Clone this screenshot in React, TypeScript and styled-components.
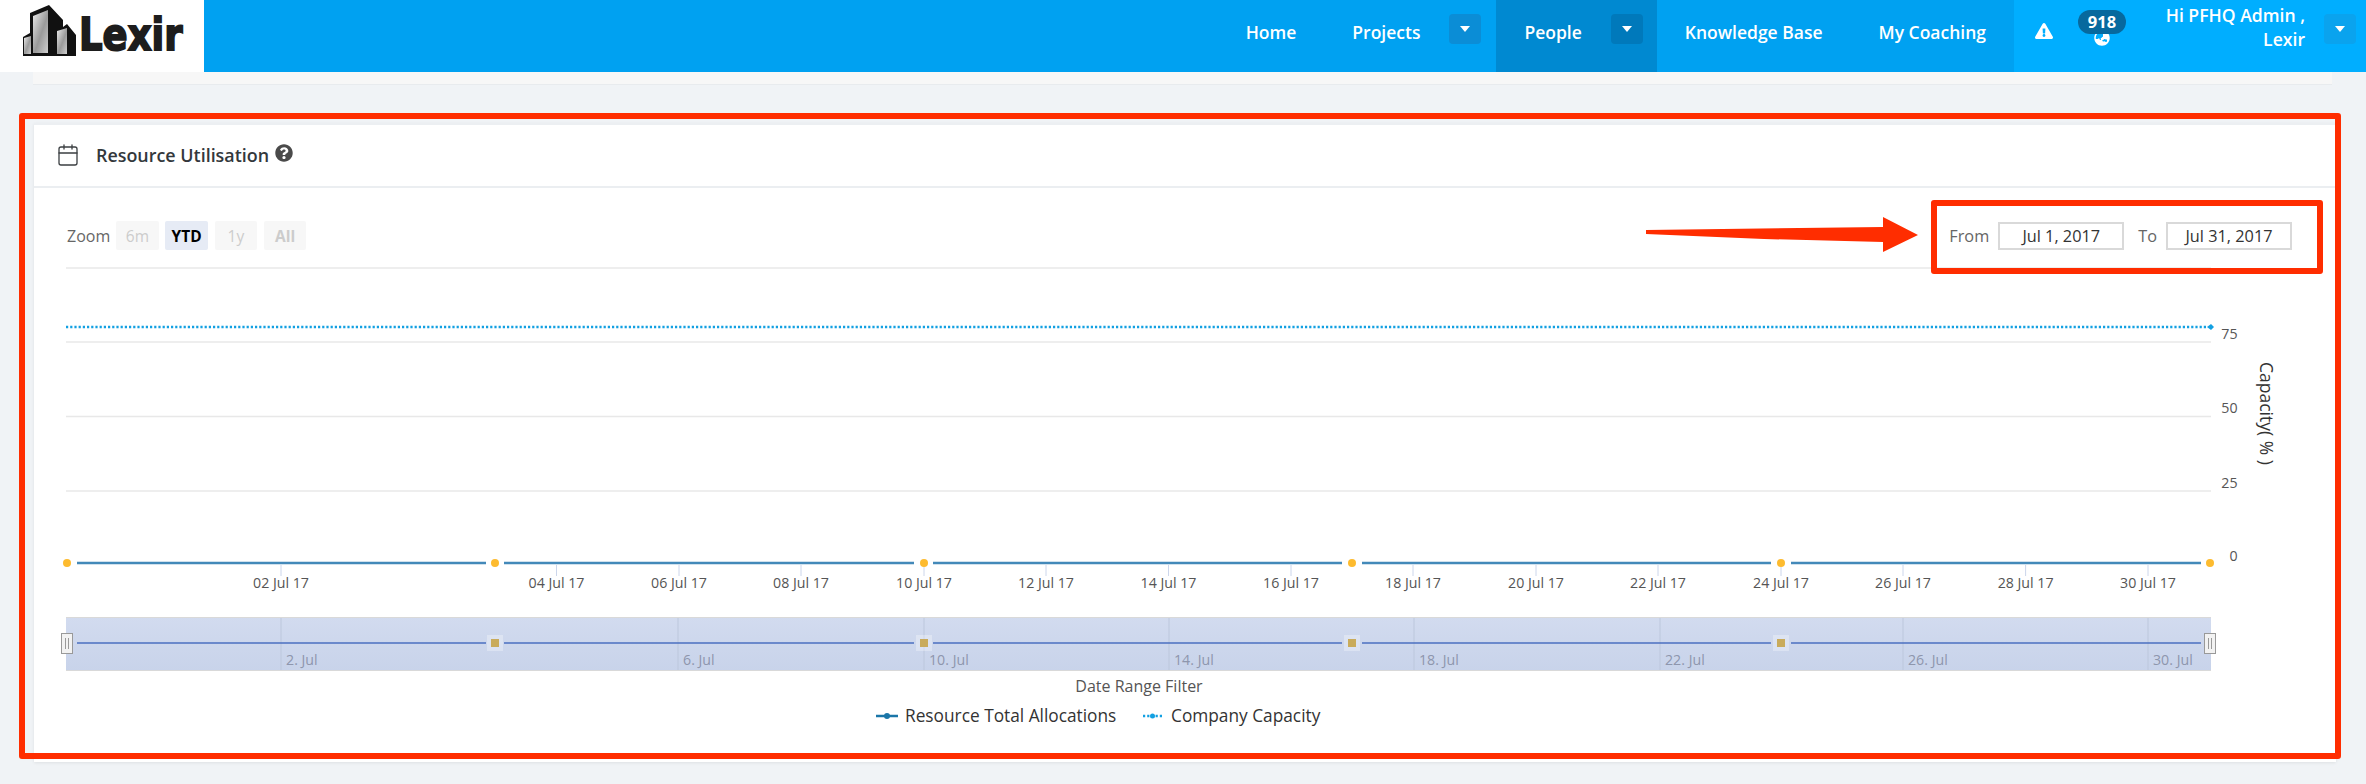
import React from "react";
import styled, { createGlobalStyle } from "styled-components";
import { FaExclamationTriangle, FaQuestionCircle, FaGlobeAsia } from "react-icons/fa";
import { Calendar } from "lucide-react";

const Global = createGlobalStyle`
  html, body { margin: 0; padding: 0; background: #f0f3f6; }
  body { font-family: "Open Sans", "Liberation Sans", sans-serif; overflow: hidden; height: 784px; }
`;

const Header = styled.header`
  display: flex; height: 72px; background: #00a1f1; color: #fff;
`;
const LogoBox = styled.div`
  width: 204px; background: #fff; display: flex; align-items: flex-start; flex: none; gap: 2px; padding: 4px 0 0 23px; box-sizing: border-box;
`;
const LogoText = styled.span`
  font-family: "DejaVu Sans", sans-serif; font-weight: 700; font-size: 37px; line-height: 44px; margin-top: 14px;
  color: #1d1d1d; -webkit-text-stroke: 1.6px #1d1d1d;
  display: inline-block; transform: scaleY(1.2); transform-origin: 0 100%;
`;
const Nav = styled.nav`
  display: flex; margin-left: auto; height: 72px; font-weight: 600; font-size: 17.5px;
`;
const NavItem = styled.div<{ $active?: boolean; $right?: number }>`
  display: flex; align-items: center; padding: 0 ${p => p.$right ?? 28}px 8px 28px; background: ${p => (p.$active ? "#0089d1" : "transparent")};
`;
const CaretButton = styled.span<{ $tone: string; $ml: number; $mt?: number }>`
  display: flex; align-items: center; justify-content: center; width: 32px; height: 30px; border-radius: 4px;
  margin-left: ${p => p.$ml}px; margin-top: ${p => p.$mt ?? 0}px; background: ${p => p.$tone}; flex: none;
  &::after { content: ""; border: 5px solid transparent; border-top: 6px solid #fff; border-bottom: 0; }
`;
const UserArea = styled.div`
  width: 352px; flex: none; background: #00aeff; display: flex; align-items: flex-start; box-sizing: border-box; padding-left: 21px;
  font-weight: 600; font-size: 17.6px;
`;
const Alert = styled.span`
  display: flex; margin-top: 22px; font-size: 18px;
`;
const Notice = styled.div`
  position: relative; width: 48px; height: 48px; margin-left: 25px; display: flex; justify-content: center; font-size: 16px; padding-top: 30px; box-sizing: border-box;
`;
const Badge = styled.span`
  position: absolute; top: 10px; left: 0; width: 48px; height: 24px; border-radius: 12px; background: #07699e;
  font-size: 16.5px; font-weight: 700; line-height: 24px; text-align: center; color: #fff;
`;
const UserName = styled.div`
  width: 152px; margin-left: 27px; text-align: right; line-height: 24px; padding-top: 3px; margin-right: 19px;
`;

const Strip = styled.div`
  height: 12px; margin: 0 34px 0 33px; background: #f7f7f7; border-bottom: 1px solid #e8ebee;
`;
const CardWrap = styled.section`
  position: relative; width: 2302px; height: 639px; margin: 38px 0 0 34px; background: #fff;
  box-shadow: 0 1px 3px rgba(0,0,0,.08); box-sizing: border-box; border-top: 2px solid #eceff2;
`;
const CardHead = styled.div`
  display: flex; align-items: center; height: 63px; border-bottom: 2px solid #ebeef1; padding: 0 0 2px 22px; box-sizing: border-box; color: #3b3f42;
`;
const Title = styled.h2`
  margin: 0 0 0 16px; font-size: 17.9px; font-weight: 600; color: #33383c;
`;
const HelpIcon = styled.span`
  display: flex; margin-left: 6px; margin-top: -3px; color: #4a4a4a; font-size: 18px;
`;
const Toolbar = styled.div`
  display: flex; align-items: center; height: 29px; margin-top: 33px; padding: 0 44px 0 33px; font-size: 16px; color: #666;
`;
const ZoomLabel = styled.span`
  margin-right: 6px; font-size: 16px;
`;
const ZoomBtn = styled.span<{ $on?: boolean; $strong?: boolean }>`
  width: 42.5px; height: 29px; margin-right: 6.7px; border-radius: 2px; display: flex; align-items: center; justify-content: center;
  background: ${p => (p.$on ? "#e6ebf5" : "#f7f7f7")}; color: ${p => (p.$on ? "#000" : "#cccccc")};
  font-weight: ${p => (p.$on || p.$strong ? 700 : 400)}; font-size: 15.5px;
`;
const DateRange = styled.div`
  margin-left: auto; display: flex; align-items: center; font-size: 16.3px; color: #666;
`;
const DateLabel = styled.label`
  margin-right: 9px;
`;
const DateField = styled.input`
  width: 126px; height: 28px; box-sizing: border-box; border: 2px solid #d9d9d9; background: #fff; margin-right: 14px; padding: 0;
  font: 16.3px "Open Sans", sans-serif; color: #333; text-align: center; outline: none;
  &:last-child { margin-right: 0; }
`;
const ChartSvg = styled.svg`
  display: block; width: 2302px; height: 510px; margin-top: 3px;
`;
const AxisText = styled.text`
  font: 14.2px "Open Sans", sans-serif; fill: #555;
`;
const NavText = styled.text`
  font: 14.2px "Open Sans", sans-serif; fill: #8e96ad;
`;
const LegendText = styled.text`
  font: 17.3px "Open Sans", sans-serif; fill: #333;
`;
const RedFrame = styled.div`
  position: absolute; left: -15px; top: -12px; width: 2322px; height: 646px; box-sizing: border-box;
  border: 6px solid #ff2d00; border-radius: 3px; pointer-events: none;
`;
const RedBox = styled.div`
  position: absolute; left: 1897px; top: 75px; width: 392px; height: 74px; box-sizing: border-box;
  border: 6px solid #ff2d00; border-radius: 3px; pointer-events: none;
`;
const Arrow = styled.svg`
  position: absolute; left: 1610px; top: 88px; width: 276px; height: 45px;
`;

const Building = () => (
  <svg width="54" height="54" viewBox="23 3 54 54" style={{ flex: "none" }}>
    <defs>
      <linearGradient id="g" x1="0" x2="1" y1="0" y2="1">
        <stop offset="0" stopColor="#ececec" />
        <stop offset="0.55" stopColor="#9a9a9a" />
        <stop offset="1" stopColor="#cfcfcf" />
      </linearGradient>
    </defs>
    <polygon fill="#111" points="23,36 30,32 30,12 49,4 63,19 63,26 67,23 76,34 76,55 23,55" />
    <polygon fill="url(#g)" points="33,15 48,9 48,52 33,52" />
    <polygon fill="url(#g)" points="24,37 31,35 31,53 24,53" />
    <polygon fill="url(#g)" points="57,30 67,27 67,53 57,53" />
  </svg>
);

const ticks = ["02","04","06","08","10","12","14","16","18","20","22","24","26","28","30"];
const tickX = [281,556.5,679,801,924,1046,1168.5,1291,1413,1536,1658,1781,1903,2025.6,2148];
const segs = [[77,486],[504,914],[933,1342],[1362,1771],[1791,2201]];
const pts = [67,495,924,1352,1781,2210];
const navTicks: [number,string][] = [[281,"2"],[678,"6"],[924,"10"],[1169,"14"],[1414,"18"],[1660,"22"],[1903,"26"],[2148,"30"]];

const Chart = () => (
  <ChartSvg viewBox="34 253 2302 510">
    <defs>
      <linearGradient id="nav" x1="0" x2="0" y1="0" y2="1">
        <stop offset="0" stopColor="#d2dbef" />
        <stop offset="1" stopColor="#c8d3ea" />
      </linearGradient>
    </defs>
    {[268,342,416.5,491].map(y => <line key={y} x1="66" x2="2211" y1={y} y2={y} stroke="#e8e8e8" strokeWidth="1.5" />)}
    <line x1="66" x2="2208" y1="327" y2="327" stroke="#12a0e2" strokeWidth="2.5" strokeDasharray="2.2 2" />
    <polygon points="2207,327 2211,324 2214,327 2211,330" fill="#12a0e2" />
    {[["75",339],["50",413],["25",488],["0",561]].map(([t,y]) => (
      <AxisText key={t} x="2237.5" y={y} textAnchor="end">{t}</AxisText>
    ))}
    <AxisText x="0" y="0" transform="translate(2260,362) rotate(90)" style={{ fontSize: 17.5, fill: "#333" }}>Capacity( % )</AxisText>
    {tickX.map((x,i) => (
      <g key={x}>
        <line x1={x} x2={x} y1="565" y2="576" stroke="#ccd6eb" />
        <AxisText x={x} y="588" textAnchor="middle">{ticks[i]} Jul 17</AxisText>
      </g>
    ))}
    {segs.map(([a,b]) => <line key={a} x1={a} x2={b} y1="563" y2="563" stroke="#4389b9" strokeWidth="2.5" />)}
    {pts.map(x => <circle key={x} cx={x} cy="563" r="4" fill="#fdbb2f" />)}

    <rect x="66" y="617" width="2145" height="54" fill="url(#nav)" />
    <line x1="66" x2="2211" y1="617.5" y2="617.5" stroke="#d9d9d9" />
    <line x1="66" x2="2211" y1="670.5" y2="670.5" stroke="#d9d9d9" />
    {navTicks.map(([x,t]) => (
      <g key={x}>
        <line x1={x} x2={x} y1="618" y2="670" stroke="#bcc7dc" />
        <NavText x={x+5} y="665">{t}. Jul</NavText>
      </g>
    ))}
    {segs.map(([a,b]) => <line key={a} x1={a} x2={b} y1="643" y2="643" stroke="#4a6fc0" strokeWidth="1.5" />)}
    {pts.slice(1,5).map(x => (
      <g key={x}>
        <rect x={x-8} y="635" width="16" height="16" fill="#fff" fillOpacity="0.3" />
        <rect x={x-4} y="639" width="8" height="8" fill="#c9ab5b" />
      </g>
    ))}
    {[61,2204].map(x => (
      <g key={x}>
        <rect x={x+.5} y="633.5" width="11" height="20" fill="#f2f2f2" stroke="#999" />
        <line x1={x+4.5} x2={x+4.5} y1="638" y2="649" stroke="#999" />
        <line x1={x+7.5} x2={x+7.5} y1="638" y2="649" stroke="#999" />
      </g>
    ))}

    <AxisText x="1139" y="692" textAnchor="middle" style={{ fontSize: 16 }}>Date Range Filter</AxisText>
    <line x1="876" x2="898" y1="716" y2="716" stroke="#1a76a8" strokeWidth="2.5" />
    <circle cx="887" cy="716" r="3" fill="#1a76a8" />
    <LegendText x="905" y="722">Resource Total Allocations</LegendText>
    <line x1="1143" x2="1162" y1="716" y2="716" stroke="#12a0e2" strokeWidth="2.5" strokeDasharray="2.2 2" />
    <circle cx="1152.5" cy="716" r="2.5" fill="#12a0e2" />
    <LegendText x="1171" y="722">Company Capacity</LegendText>
  </ChartSvg>
);

export default function App() {
  return (
    <>
      <Global />
      <Header>
        <LogoBox><Building /><LogoText>Lexir</LogoText></LogoBox>
        <Nav>
          <NavItem>Home</NavItem>
          <NavItem $right={15}>Projects<CaretButton $tone="#0b8dd6" $ml={29} $mt={-6} /></NavItem>
          <NavItem $active $right={14}>People<CaretButton $tone="#0079bb" $ml={29} $mt={-6} /></NavItem>
          <NavItem>Knowledge Base</NavItem>
          <NavItem>My Coaching</NavItem>
        </Nav>
        <UserArea>
          <Alert><FaExclamationTriangle /></Alert>
          <Notice><FaGlobeAsia /><Badge>918</Badge></Notice>
          <UserName>Hi PFHQ Admin ,<br />Lexir</UserName>
          <CaretButton $tone="#0aa3ee" $ml={0} $mt={14} />
        </UserArea>
      </Header>
      <Strip />
      <CardWrap>
        <CardHead>
          <Calendar size={24} strokeWidth={1.3} />
          <Title>Resource Utilisation</Title>
          <HelpIcon><FaQuestionCircle /></HelpIcon>
        </CardHead>
        <Toolbar>
          <ZoomLabel>Zoom</ZoomLabel>
          <ZoomBtn>6m</ZoomBtn>
          <ZoomBtn $on>YTD</ZoomBtn>
          <ZoomBtn>1y</ZoomBtn>
          <ZoomBtn $strong>All</ZoomBtn>
          <DateRange>
            <DateLabel>From</DateLabel>
            <DateField readOnly value="Jul 1, 2017" />
            <DateLabel>To</DateLabel>
            <DateField readOnly value="Jul 31, 2017" />
          </DateRange>
        </Toolbar>
        <Chart />
        <RedFrame />
        <RedBox />
        <Arrow viewBox="0 0 276 45">
          <polygon fill="#ff2d00" points="2,17 239,14 239,4 274,22 239,39 239,29 120,26 2,21" />
        </Arrow>
      </CardWrap>
    </>
  );
}
